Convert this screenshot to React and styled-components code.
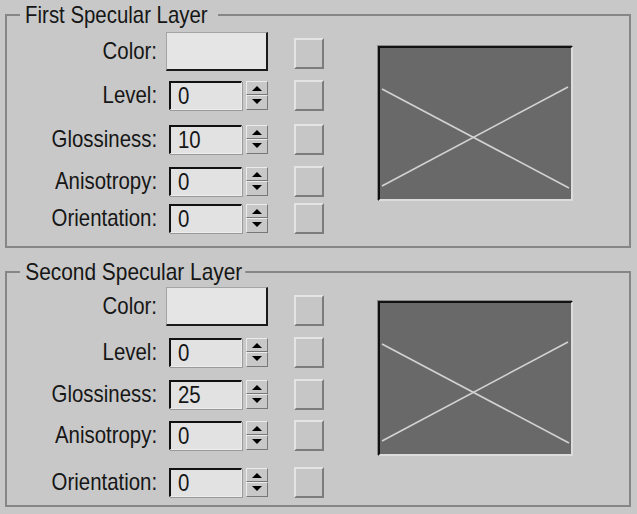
import React from 'react';
import styled, { createGlobalStyle } from 'styled-components';

const Global = createGlobalStyle`
  html, body { margin: 0; padding: 0; background: #c8c8c8; }
  body {
    font-family: "Liberation Sans", Arial, sans-serif;
  }
`;

const Page = styled.div`
  width: 637px;
  height: 514px;
  box-sizing: border-box;
  padding: 14px 0 0 5px;
  display: flex;
  flex-direction: column;
  gap: 23px;
  background: #c8c8c8;
  color: #161616;
  font-size: 24px;
  overflow: hidden;
`;

const Group = styled.section`
  position: relative;
  box-sizing: border-box;
  width: 626px;
  height: ${(p) => p.$h}px;
  border: 2px solid #868686;
  display: flex;
  align-items: flex-start;
`;

const Legend = styled.div`
  position: absolute;
  top: -13px;
  left: 13px;
  padding: 0 ${(p) => p.$pr}px 0 6px;
  background: #c8c8c8;
  line-height: 24px;
  white-space: nowrap;
  transform: scaleX(${(p) => p.$sx});
  transform-origin: left center;
`;

const Narrow = styled.span`
  display: inline-block;
  transform: scaleX(0.85);
  transform-origin: ${(p) => p.$origin || 'left'} center;
`;

const Rows = styled.div`
  display: flex;
  flex-direction: column;
  width: 317px;
  flex: none;
`;

const Row = styled.div`
  display: flex;
  align-items: center;
  height: ${(p) => p.$h || 32}px;
  margin-top: ${(p) => p.$mt}px;
`;

const Label = styled.div`
  width: 150px;
  flex: none;
  text-align: right;
  white-space: nowrap;
  line-height: 24px;
`;

const Control = styled.div`
  width: 102px;
  margin-left: 9px;
  flex: none;
  display: flex;
  align-items: center;
`;

const Swatch = styled.div`
  box-sizing: border-box;
  width: 102px;
  height: 39px;
  background: #e5e5e5;
  border-top: 1px solid #a4a4a4;
  border-left: 1px solid #a4a4a4;
  border-right: 2px solid #1a1a1a;
  border-bottom: 2px solid #1a1a1a;
`;

const Field = styled.div`
  box-sizing: border-box;
  margin-left: 3px;
  width: 73px;
  height: 29px;
  background: #e2e2e2;
  border-top: 2px solid #111;
  border-left: 2px solid #111;
  border-right: 1px solid #ededed;
  border-bottom: 1px solid #ededed;
  box-shadow: 1px 1px 0 #9a9a9a;
  padding-left: 7px;
  line-height: 26px;
  white-space: nowrap;
`;

const Spinner = styled.div`
  margin-left: 4px;
  width: 22px;
  height: 29px;
  display: flex;
  flex-direction: column;
`;

const SpinBtn = styled.div`
  flex: 1;
  box-sizing: border-box;
  background: #c8c8c8;
  border-top: 1px solid #ececec;
  border-left: 1px solid #ececec;
  border-right: 1px solid #777;
  border-bottom: 1px solid #777;
  display: flex;
  align-items: center;
  justify-content: center;
`;

const Arrow = styled.span`
  width: 0;
  height: 0;
  border-left: 5px solid transparent;
  border-right: 5px solid transparent;
  ${(p) =>
    p.$dir === 'up'
      ? 'border-bottom: 5px solid #000; margin-top: 2px;'
      : 'border-top: 5px solid #000; margin-bottom: 2px;'}
`;

const MapButton = styled.div`
  box-sizing: border-box;
  margin-left: 26px;
  margin-top: ${(p) => p.$dy || 0}px;
  width: 30px;
  height: 31px;
  flex: none;
  background: #c6c6c6;
  border-top: 2px solid #e4e4e4;
  border-left: 2px solid #e4e4e4;
  border-right: 2px solid #7c7c7c;
  border-bottom: 2px solid #7c7c7c;
`;

const Preview = styled.div`
  box-sizing: border-box;
  margin-left: 54px;
  margin-top: ${(p) => p.$mt}px;
  width: 195px;
  height: 155px;
  flex: none;
  background: #696969;
  border-top: 2px solid #111;
  border-left: 2px solid #111;
  border-right: 2px solid #dcdcdc;
  border-bottom: 2px solid #dcdcdc;
  box-shadow: -1px -1px 0 #8a8a8a;
  svg { display: block; }
`;

function Spin() {
  return (
    <Spinner>
      <SpinBtn><Arrow $dir="up" /></SpinBtn>
      <SpinBtn><Arrow $dir="down" /></SpinBtn>
    </Spinner>
  );
}

function Curve() {
  return (
    <svg width="191" height="151" viewBox="0 0 191 151">
      <line x1="2" y1="41" x2="189" y2="140" stroke="#d2d2d2" strokeWidth="1.6" />
      <line x1="2" y1="138" x2="188" y2="39" stroke="#d2d2d2" strokeWidth="1.6" />
    </svg>
  );
}

function Layer({ title, pr, sx, h, rows, gloss, previewTop, colorDy }) {
  const labels = ['Level:', 'Glossiness:', 'Anisotropy:', 'Orientation:'];
  const values = ['0', gloss, '0', '0'];
  return (
    <Group $h={h}>
      <Legend $pr={pr} $sx={sx}>{title}</Legend>
      <Rows>
        <Row $mt={rows[0]} $h={40}>
          <Label><Narrow $origin="right">Color:</Narrow></Label>
          <Control><Swatch /></Control>
          <MapButton $dy={colorDy} />
        </Row>
        {labels.map((l, i) => (
          <Row key={l} $mt={rows[i + 1]}>
            <Label><Narrow $origin="right">{l}</Narrow></Label>
            <Control>
              <Field><Narrow>{values[i]}</Narrow></Field>
              <Spin />
            </Control>
            <MapButton />
          </Row>
        ))}
      </Rows>
      <Preview $mt={previewTop}>
        <Curve />
      </Preview>
    </Group>
  );
}

export default function App() {
  return (
    <>
      <Global />
      <Page>
        <Layer
          title="First Specular Layer"
          pr={12}
          sx={0.85}
          h={234}
          rows={[15, 8, 12, 10, 5]}
          gloss="10"
          previewTop={30}
          colorDy={5}
        />
        <Layer
          title="Second Specular Layer"
          pr={3}
          sx={0.87}
          h={236}
          rows={[13, 10, 10, 9, 15]}
          gloss="25"
          previewTop={28}
          colorDy={8}
        />
      </Page>
    </>
  );
}
